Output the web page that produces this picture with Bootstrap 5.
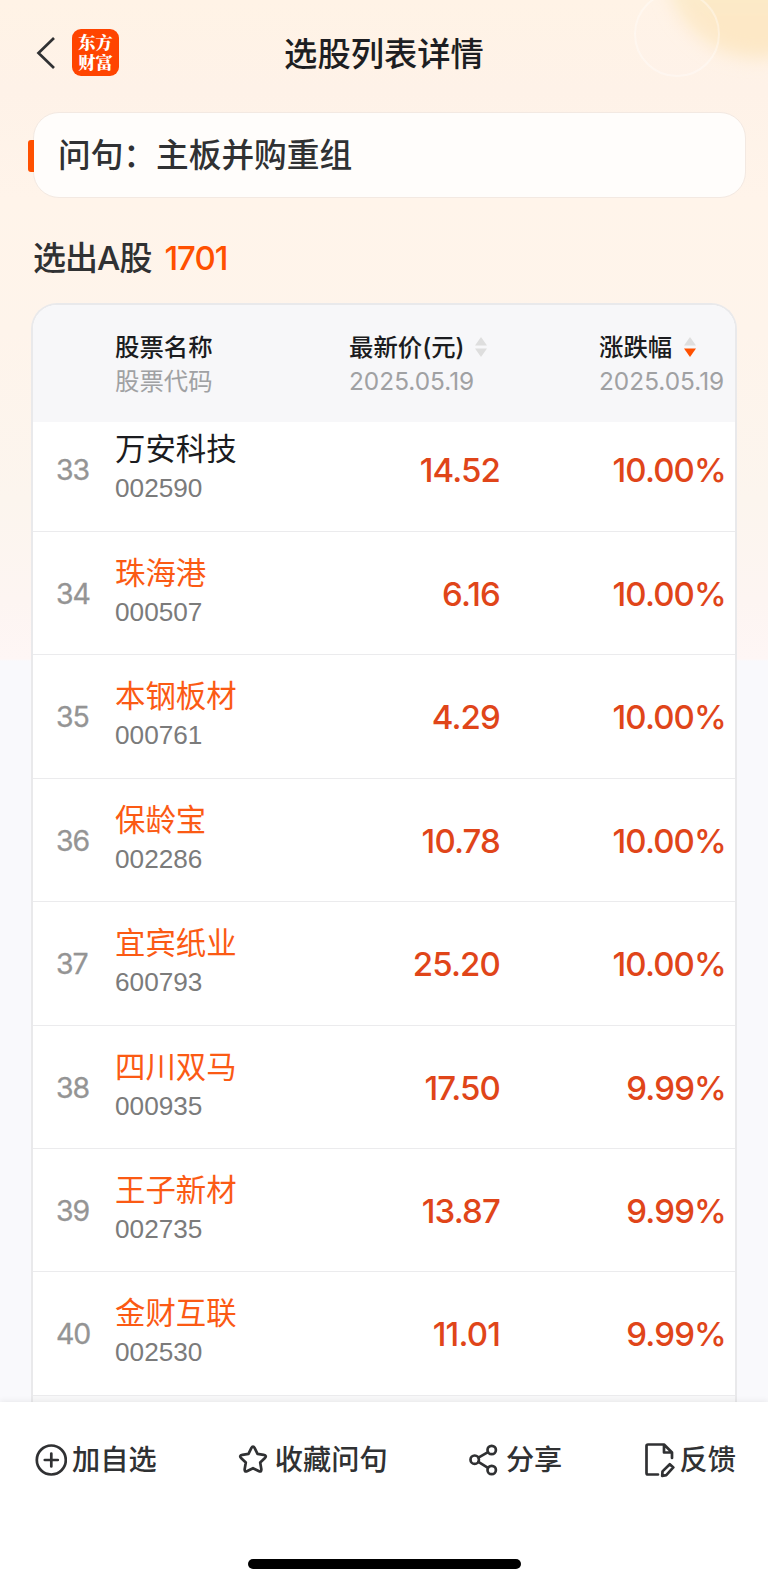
<!DOCTYPE html>
<html lang="zh-CN">
<head>
<meta charset="utf-8">
<meta name="viewport" content="width=device-width, initial-scale=1">
<title>选股列表详情</title>
<link href="https://cdn.jsdelivr.net/npm/bootstrap@5.3.0/dist/css/bootstrap.min.css" rel="stylesheet">
<style>
  body { font-family: Inter, "Noto Sans CJK SC", sans-serif; color: #303133; background: #fff; }
  .screen { width: 768px; height: 1585px; position: relative; overflow: hidden;
    background: linear-gradient(180deg, #fff3e6 0, #fef2e8 90px, #fff4ea 200px, #fef4eb 330px, #fcf5ee 500px, #fdf5f2 600px, #fef6f5 659px, #f9f9fc 661px, #f9f9fc 100%); }
  .glow { position: absolute; left: 600px; top: -30px; width: 168px; height: 140px; z-index: 0; }
  .topbar { height: 112px; padding: 29px 0 0 36px; }
  .back { margin-top: 8px; }
  .brand { width: 47px; height: 47px; border-radius: 9px; background: #ff4400; color: #fff; margin-left: 17px;
    font: 900 17.3px/20px "Noto Serif CJK SC", "Noto Sans CJK SC", sans-serif; padding-top: 3px; }
  .heading { left: 0; right: 0; top: 30px; font-size: 33.3px; line-height: 48px; font-weight: 500; color: #1d1e22; }
  .query { margin: 0 22px 0 33px; height: 86px; border: 1px solid #f3e9e2; border-radius: 26px; background: #fffdfb;
    font-size: 32.7px; font-weight: 500; padding-left: 24px; line-height: 84px; }
  .tick { left: -6px; top: 27px; width: 6px; height: 32px; background: #ff5000; border-radius: 3px 0 0 3px; }
  .summary { height: 105px; padding: 34px 0 0 33px; font-size: 33px; line-height: 52px; font-weight: 500; letter-spacing: -1px; }
  .summary b { color: #ff5000; font-weight: 500; margin-left: 13px; }
  .board { margin: 0 31px; height: 1099px; border: 2px solid #e9e9eb; border-bottom: 0; border-radius: 26px 26px 0 0; background: #fff; overflow: hidden; }
  .cols { display: grid; grid-template-columns: 82px 234px 250px 1fr; }
  .thead-row { height: 117px; background: #f7f7f9; padding-top: 25px; font-size: 24.4px; line-height: 34px; color: #1b1c20; font-weight: 500; }
  .thead-row .sub { color: #a0a1a3; font-weight: 400; }
  .sort { margin-left: 10px; }
  .sort.on { margin-left: 12px; }
  .stock { height: 123.4px; border-bottom: 1px solid #ebebed; }
  .stock.first { height: 110px; }
  .stock.first > * { margin-top: -14px; }
  .idx { font-size: 28.5px; line-height: 32px; letter-spacing: -1.1px; color: #949494; padding: 46px 0 0 23px; -webkit-text-stroke: .3px #949494; }
  .sname { font-size: 30.4px; line-height: 40px; padding-top: 21px; color: #fb5a14; }
  .first .sname { color: #1b1c20; }
  .code { font: 26.2px/36px "Liberation Sans", sans-serif; color: #7b7b7b; padding-top: 1px; }
  .num { font-size: 33px; line-height: 40px; letter-spacing: -.85px; font-weight: 500; color: #e04519; text-align: right; padding-top: 42px; }
  .price { padding-right: 99px; }
  .rate { padding-right: 9px; }
  .tail { height: 12px; background: #f8f8f9; }
  .actions { position: relative; height: 183px; background: #fff; box-shadow: 0 -1px 6px rgba(0,0,0,.07); padding: 38px 32px 0 35px; font-size: 28.2px; line-height: 40px; font-weight: 500; z-index: 1; }
  .homebar { left: 248px; top: 157px; width: 273px; height: 10px; border-radius: 5px; background: #000; }
  svg.ln { fill: none; stroke: #303133; stroke-width: 2.7; stroke-linecap: round; stroke-linejoin: round; }
  svg.sharp { stroke-linecap: butt; stroke-linejoin: miter; }
  .gap-5px { gap: 5px; }
</style>
</head>
<body>
<div class="screen d-flex flex-column">
  <svg class="glow" viewBox="600 -30 168 140">
    <defs><filter id="soft" x="-50%" y="-50%" width="200%" height="200%"><feGaussianBlur stdDeviation="9"/></filter>
    <linearGradient id="sun" x1="0" y1="0" x2="0" y2="1"><stop offset=".5" stop-color="#f9eecb"/><stop offset=".75" stop-color="#fde8c6"/></linearGradient></defs>
    <circle cx="758" cy="-34" r="92" fill="url(#sun)" filter="url(#soft)"/>
    <circle cx="677" cy="34" r="42" fill="#fff" fill-opacity=".06" stroke="#fff" stroke-opacity=".35" stroke-width="2"/>
  </svg>
  <header class="topbar position-relative d-flex align-items-start flex-shrink-0">
    <svg class="back ln sharp" width="19" height="32" viewBox="0 0 19 32"><path d="M18 1 2.500 16 18 31"/></svg>
    <div class="brand text-center"><div>东方</div><div>财富</div></div>
    <div class="heading position-absolute text-center">选股列表详情</div>
  </header>
  <section class="query position-relative flex-shrink-0"><span class="tick position-absolute"></span>问句：主板并购重组</section>
  <div class="summary flex-shrink-0">选出A股<b>1701</b></div>
  <main class="board flex-shrink-0">
    <div class="cols thead-row">
      <div></div>
      <div>股票名称<div class="sub">股票代码</div></div>
      <div><div class="d-flex align-items-center">最新价(元)<svg width="12" height="20" viewBox="0 0 12 20" class="sort"><path d="M6 0 12 8.500H0z" fill="#dedede"/><path d="M6 20 0 11.500h12z" fill="#dedede"/></svg></div><div class="sub">2025.05.19</div></div>
      <div><div class="d-flex align-items-center">涨跌幅<svg width="12" height="20" viewBox="0 0 12 20" class="sort on"><path d="M6 0 12 8.500H0z" fill="#dedede"/><path d="M6 20 0 11.500h12z" fill="#ff5000"/></svg></div><div class="sub">2025.05.19</div></div>
    </div>
    <div class="cols stock first"><div class="idx">33</div><div><div class="sname">万安科技</div><div class="code">002590</div></div><div class="num price">14.52</div><div class="num rate">10.00%</div></div>
    <div class="cols stock"><div class="idx">34</div><div><div class="sname">珠海港</div><div class="code">000507</div></div><div class="num price">6.16</div><div class="num rate">10.00%</div></div>
    <div class="cols stock"><div class="idx">35</div><div><div class="sname">本钢板材</div><div class="code">000761</div></div><div class="num price">4.29</div><div class="num rate">10.00%</div></div>
    <div class="cols stock"><div class="idx">36</div><div><div class="sname">保龄宝</div><div class="code">002286</div></div><div class="num price">10.78</div><div class="num rate">10.00%</div></div>
    <div class="cols stock"><div class="idx">37</div><div><div class="sname">宜宾纸业</div><div class="code">600793</div></div><div class="num price">25.20</div><div class="num rate">10.00%</div></div>
    <div class="cols stock"><div class="idx">38</div><div><div class="sname">四川双马</div><div class="code">000935</div></div><div class="num price">17.50</div><div class="num rate">9.99%</div></div>
    <div class="cols stock"><div class="idx">39</div><div><div class="sname">王子新材</div><div class="code">002735</div></div><div class="num price">13.87</div><div class="num rate">9.99%</div></div>
    <div class="cols stock"><div class="idx">40</div><div><div class="sname">金财互联</div><div class="code">002530</div></div><div class="num price">11.01</div><div class="num rate">9.99%</div></div>
    <div class="tail"></div>
  </main>
  <footer class="actions flex-shrink-0">
    <div class="d-flex justify-content-between">
      <div class="d-flex align-items-center gap-5px"><svg class="ln" width="32" height="32" viewBox="0 0 32 32"><circle cx="16.300" cy="16" r="14.500"/><path d="M16.300 9.500v13M9.800 16h13"/></svg><span>加自选</span></div>
      <div class="d-flex align-items-center"><svg class="ln" width="30" height="32" viewBox="0 0 30 32"><path d="M10.500 9.900 13.300 4.200Q15 .8 16.700 4.200L19.500 9.900 25.600 10.800Q29.400 11.600 26.700 14.200L22.200 18.500 23.300 25Q23.700 28.600 20.600 27L15 24.200 9.400 27Q6.300 28.600 6.700 25L7.800 18.500 3.300 14.200Q.6 11.600 4.400 10.800z"/></svg><span style="margin-left:7px">收藏问句</span></div>
      <div class="d-flex align-items-center"><svg class="ln" width="29" height="32" viewBox="0 0 29 32"><circle cx="5.700" cy="15.700" r="4.200"/><circle cx="22.700" cy="6" r="4.200"/><circle cx="22.700" cy="26" r="4.200"/><path d="m9.400 13.600 9.600-5.500M9.400 17.900l9.600 5.900"/></svg><span class="ms-2">分享</span></div>
      <div class="d-flex align-items-center gap-5px"><svg class="ln" width="31" height="36" viewBox="0 0 31 36"><path d="M14 32.500H4A1.500 1.500 0 0 1 2.500 31V4A1.500 1.500 0 0 1 4 2.500h16l8 8V16M20 2.500v8h8M18.200 34l.3-4.600 7.300-7.200 3.500 3.200-7 7.700z"/></svg><span>反馈</span></div>
    </div>
    <div class="homebar position-absolute"></div>
  </footer>
</div>
<script src="https://cdn.jsdelivr.net/npm/bootstrap@5.3.0/dist/js/bootstrap.bundle.min.js"></script>
</body>
</html>
